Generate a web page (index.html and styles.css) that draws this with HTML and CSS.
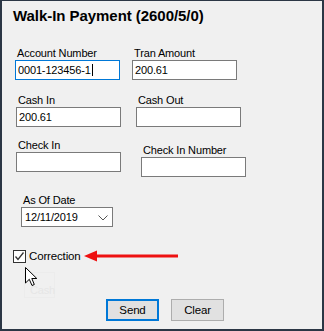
FILE: index.html
```html
<!DOCTYPE html>
<html>
<head>
<meta charset="utf-8">
<link rel="stylesheet" href="styles.css">
</head>
<body>
<div class="win">
  <div class="title">Walk-In Payment (2600/5/0)</div>

  <div class="row row1">
    <div class="field f-acct">
      <div class="lbl">Account Number</div>
      <div class="box focus"><span class="caret">0001-123456-1</span></div>
    </div>
    <div class="field f-tran">
      <div class="lbl">Tran Amount</div>
      <div class="box">200.61</div>
    </div>
  </div>

  <div class="row row2">
    <div class="field f-cashin">
      <div class="lbl">Cash In</div>
      <div class="box">200.61</div>
    </div>
    <div class="field f-cashout">
      <div class="lbl">Cash Out</div>
      <div class="box"></div>
    </div>
  </div>

  <div class="row row3">
    <div class="field f-checkin">
      <div class="lbl">Check In</div>
      <div class="box"></div>
    </div>
    <div class="field f-checknum">
      <div class="lbl">Check In Number</div>
      <div class="box"></div>
    </div>
  </div>

  <div class="field f-date">
    <div class="lbl">As Of Date</div>
    <div class="box date">
      <span>12/11/2019</span>
      <svg class="chev" width="10" height="6" viewBox="0 0 10 6"><path d="M0.5 0.5 L5 5 L9.5 0.5" fill="none" stroke="#555" stroke-width="1"/></svg>
    </div>
  </div>

  <div class="check-row">
    <div class="cbox">
      <svg width="11" height="11" viewBox="0 0 11 11"><path d="M1.5 5.5 L4 8.5 L9.5 1.5" fill="none" stroke="#333" stroke-width="1.3"/></svg>
    </div>
    <span class="cbl">Correction</span>
  </div>

  <div class="btn-row">
    <div class="btn primary">Send</div>
    <div class="btn">Clear</div>
  </div>

  <div class="ghost">Cash</div>

  <svg class="arrow" width="96" height="12" viewBox="0 0 96 12">
    <path d="M0 6 L13 0.5 L13 11.5 Z" fill="#ee1111"/>
    <rect x="10" y="4.5" width="84" height="3" fill="#ee1111"/>
  </svg>

  <svg class="cursor" width="13" height="20" viewBox="0 0 13 20">
    <path d="M0.5 0.5 L0.5 16 L4.3 12.3 L7 18.5 L9.3 17.5 L6.8 11.5 L11.8 11.5 Z" fill="#fff" stroke="#000" stroke-width="1" stroke-linejoin="miter"/>
  </svg>
</div>
</body>
</html>
```

FILE: styles.css
```css
html, body {
  margin: 0;
  padding: 0;
  background: #f0f0f0;
}

.win {
  position: relative;
  width: 324px;
  height: 331px;
  box-sizing: border-box;
  background: #f0f0f0;
  border-style: solid;
  border-color: #2b3645;
  border-width: 1px 2px 2px 2px;
  font-family: "Liberation Sans", Arial, sans-serif;
  font-size: 11px;
  letter-spacing: -0.15px;
  color: #000;
  overflow: hidden;
}

.title {
  margin: 5.5px 0 0 11px;
  font-size: 15px;
  font-weight: bold;
  line-height: 18px;
  letter-spacing: -0.05px;
}

.row {
  display: flex;
  align-items: flex-start;
}

.row1 { margin-top: 21.5px; padding-left: 13px; gap: 12px; }
.row2 { margin-top: 13px; padding-left: 14px; gap: 15px; }
.row3 { margin-top: 11px; padding-left: 14px; gap: 20px; }

.field {
  display: flex;
  flex-direction: column;
}

.f-checknum { margin-top: 5px; }

.lbl {
  line-height: 14px;
  padding-left: 2px;
  white-space: nowrap;
}

.box {
  width: 105px;
  height: 20px;
  box-sizing: border-box;
  border: 1px solid #7a7a7a;
  background: #fff;
  line-height: 18px;
  padding-left: 2px;
  white-space: nowrap;
}

.box.focus {
  border-color: #0078d7;
}

.caret {
  border-right: 1px solid #000;
  padding-right: 1px;
}

.f-date {
  margin: 16px 0 0 19px;
}

.box.date {
  width: 92px;
  display: flex;
  align-items: center;
  justify-content: space-between;
  padding: 0 4px 0 3px;
}

.chev {
  display: block;
  margin-top: 2px;
}

.check-row {
  display: flex;
  align-items: center;
  margin: 22px 0 0 11px;
  gap: 3px;
}

.cbox {
  width: 13px;
  height: 13px;
  box-sizing: border-box;
  border: 1px solid #333;
  background: #fff;
  display: flex;
  align-items: center;
  justify-content: center;
}

.cbox svg { display: block; }

.cbl {
  line-height: 14px;
  font-size: 11.5px;
}

.btn-row {
  display: flex;
  gap: 12px;
  margin: 36px 0 0 104px;
}

.btn {
  width: 53px;
  height: 22px;
  box-sizing: border-box;
  border: 1px solid #adadad;
  background: #e1e1e1;
  text-align: center;
  line-height: 20px;
  font-size: 11.5px;
}

.btn.primary {
  border: 2px solid #0078d7;
  line-height: 18px;
}

.ghost {
  position: absolute;
  left: 22px;
  top: 271px;
  width: 31px;
  height: 26px;
  box-sizing: border-box;
  border: 1px solid #ececec;
  color: #e6e6e6;
  line-height: 34px;
  padding-left: 5px;
  font-size: 11px;
}

.arrow {
  position: absolute;
  left: 82px;
  top: 249px;
}

.cursor {
  position: absolute;
  left: 22.5px;
  top: 265.5px;
}
```
